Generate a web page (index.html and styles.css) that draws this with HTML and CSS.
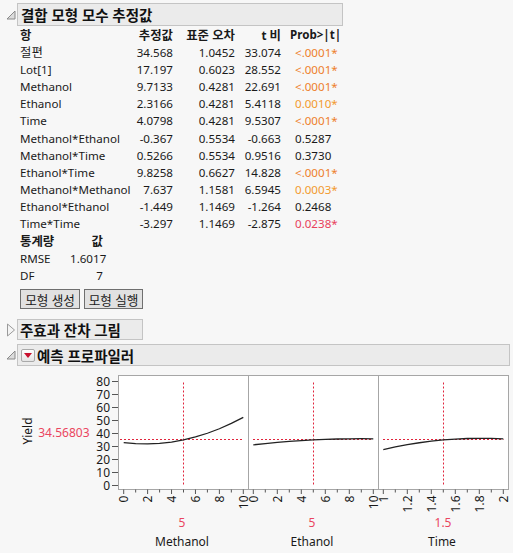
FILE: index.html
```html
<!DOCTYPE html>
<html lang="ko">
<head>
<meta charset="utf-8">
<title>결합 모형 모수 추정값</title>
<link rel="stylesheet" href="styles.css">
</head>
<body>
<section class="outline">
  <div class="head">
    <svg class="tri" width="10" height="10" viewBox="0 0 10 10"><polygon points="1,9 9,1 9,9" /></svg>
    <div class="title t1">결합 모형 모수 추정값</div>
  </div>
  <div class="body">
    <div class="est">
      <div class="h l ko">항</div><div class="h r ko">추정값</div><div class="h r ko">표준 오차</div><div class="h r">t <span class="ko">비</span></div><div class="h p">Prob&gt;|t|</div>
      <div class="ko">절편</div><div class="r">34.568</div><div class="r">1.0452</div><div class="r">33.074</div><div class="p o1">&lt;.0001*</div>
      <div>Lot[1]</div><div class="r">17.197</div><div class="r">0.6023</div><div class="r">28.552</div><div class="p o1">&lt;.0001*</div>
      <div>Methanol</div><div class="r">9.7133</div><div class="r">0.4281</div><div class="r">22.691</div><div class="p o1">&lt;.0001*</div>
      <div>Ethanol</div><div class="r">2.3166</div><div class="r">0.4281</div><div class="r">5.4118</div><div class="p o2">0.0010*</div>
      <div>Time</div><div class="r">4.0798</div><div class="r">0.4281</div><div class="r">9.5307</div><div class="p o1">&lt;.0001*</div>
      <div>Methanol*Ethanol</div><div class="r">-0.367</div><div class="r">0.5534</div><div class="r">-0.663</div><div class="p">0.5287</div>
      <div>Methanol*Time</div><div class="r">0.5266</div><div class="r">0.5534</div><div class="r">0.9516</div><div class="p">0.3730</div>
      <div>Ethanol*Time</div><div class="r">9.8258</div><div class="r">0.6627</div><div class="r">14.828</div><div class="p o1">&lt;.0001*</div>
      <div>Methanol*Methanol</div><div class="r">7.637</div><div class="r">1.1581</div><div class="r">6.5945</div><div class="p o2">0.0003*</div>
      <div>Ethanol*Ethanol</div><div class="r">-1.449</div><div class="r">1.1469</div><div class="r">-1.264</div><div class="p">0.2468</div>
      <div>Time*Time</div><div class="r">-3.297</div><div class="r">1.1469</div><div class="r">-2.875</div><div class="p o3">0.0238*</div>
    </div>
    <div class="stats">
      <div class="h ko">통계량</div><div class="h r ko">값</div>
      <div>RMSE</div><div class="r">1.6017</div>
      <div>DF</div><div class="r">7</div>
    </div>
    <div class="btns">
      <button class="btn b1">모형 생성</button><button class="btn b2">모형 실행</button>
    </div>
  </div>
</section>

<section class="outline s2">
  <div class="head">
    <svg class="tri closed" width="10" height="14" viewBox="0 0 10 14"><polygon points="1.5,1 8.5,7 1.5,13" /></svg>
    <div class="title t2">주효과 잔차 그림</div>
  </div>
</section>

<section class="outline s3">
  <div class="head">
    <svg class="tri" width="10" height="10" viewBox="0 0 10 10"><polygon points="1,9 9,1 9,9" /></svg>
    <div class="title t3"><span class="menu"><span class="arrow"></span></span>예측 프로파일러</div>
  </div>
  <svg class="prof" width="513" height="187" viewBox="0 366 513 187">
    <text class="lab" transform="translate(27,431) rotate(-90)" text-anchor="middle" dominant-baseline="central">Yield</text>
    <text class="red" x="89.5" y="432" text-anchor="end" dominant-baseline="central">34.56803</text>
    <g class="ticks">
      <line x1="112" y1="485.5" x2="118" y2="485.5"/>
      <line x1="112" y1="472.5" x2="118" y2="472.5"/>
      <line x1="112" y1="459.5" x2="118" y2="459.5"/>
      <line x1="112" y1="446.5" x2="118" y2="446.5"/>
      <line x1="112" y1="433.5" x2="118" y2="433.5"/>
      <line x1="112" y1="420.5" x2="118" y2="420.5"/>
      <line x1="112" y1="407.5" x2="118" y2="407.5"/>
      <line x1="112" y1="394.5" x2="118" y2="394.5"/>
      <line x1="112" y1="381.5" x2="118" y2="381.5"/>
    </g>
    <g class="num" text-anchor="end" dominant-baseline="central">
      <text x="110" y="485">0</text>
      <text x="110" y="472">10</text>
      <text x="110" y="459">20</text>
      <text x="110" y="446">30</text>
      <text x="110" y="433">40</text>
      <text x="110" y="420">50</text>
      <text x="110" y="407">60</text>
      <text x="110" y="394">70</text>
      <text x="110" y="381">80</text>
    </g>
    <rect class="frame" x="118.5" y="375.5" width="130" height="114"/>
    <rect class="frame" x="248.5" y="375.5" width="130" height="114"/>
    <rect class="frame" x="378.5" y="375.5" width="130" height="114"/>
    <g class="ref">
      <line x1="120" y1="439.5" x2="242" y2="439.5"/>
      <line x1="183.5" y1="382.5" x2="183.5" y2="486"/>
      <line x1="253" y1="439.5" x2="373" y2="439.5"/>
      <line x1="313.5" y1="382.5" x2="313.5" y2="486"/>
      <line x1="383" y1="439.5" x2="503.5" y2="439.5"/>
      <line x1="443.5" y1="382.5" x2="443.5" y2="486"/>
    </g>
    <g class="curve">
      <polyline points="123.7,442.63 135.66,443.68 147.62,443.94 159.58,443.40 171.54,442.06 183.5,439.92 195.46,436.99 207.42,433.26 219.38,428.74 231.34,423.42 243.3,417.30"/>
      <polyline points="253.3,444.83 265.3,443.55 277.3,442.42 289.3,441.43 301.3,440.60 313.3,439.92 325.3,439.40 337.3,439.02 349.3,438.79 361.3,438.72 373.3,438.79"/>
      <polyline points="383.3,449.54 395.3,446.93 407.3,444.66 419.3,442.74 431.3,441.16 443.3,439.92 455.3,439.03 467.3,438.48 479.3,438.28 491.3,438.42 503.3,438.90"/>
    </g>
    <g class="ticks">
      <line x1="123.7" y1="489.5" x2="123.7" y2="494"/><line x1="135.66" y1="489.5" x2="135.66" y2="492.5"/>
      <line x1="147.62" y1="489.5" x2="147.62" y2="494"/><line x1="159.58" y1="489.5" x2="159.58" y2="492.5"/>
      <line x1="171.54" y1="489.5" x2="171.54" y2="494"/><line x1="183.5" y1="489.5" x2="183.5" y2="492.5"/>
      <line x1="195.46" y1="489.5" x2="195.46" y2="494"/><line x1="207.42" y1="489.5" x2="207.42" y2="492.5"/>
      <line x1="219.38" y1="489.5" x2="219.38" y2="494"/><line x1="231.34" y1="489.5" x2="231.34" y2="492.5"/>
      <line x1="243.3" y1="489.5" x2="243.3" y2="494"/>
      <line x1="253.3" y1="489.5" x2="253.3" y2="494"/><line x1="265.3" y1="489.5" x2="265.3" y2="492.5"/>
      <line x1="277.3" y1="489.5" x2="277.3" y2="494"/><line x1="289.3" y1="489.5" x2="289.3" y2="492.5"/>
      <line x1="301.3" y1="489.5" x2="301.3" y2="494"/><line x1="313.3" y1="489.5" x2="313.3" y2="492.5"/>
      <line x1="325.3" y1="489.5" x2="325.3" y2="494"/><line x1="337.3" y1="489.5" x2="337.3" y2="492.5"/>
      <line x1="349.3" y1="489.5" x2="349.3" y2="494"/><line x1="361.3" y1="489.5" x2="361.3" y2="492.5"/>
      <line x1="373.3" y1="489.5" x2="373.3" y2="494"/>
      <line x1="383.3" y1="489.5" x2="383.3" y2="494"/><line x1="395.3" y1="489.5" x2="395.3" y2="492.5"/>
      <line x1="407.3" y1="489.5" x2="407.3" y2="494"/><line x1="419.3" y1="489.5" x2="419.3" y2="492.5"/>
      <line x1="431.3" y1="489.5" x2="431.3" y2="494"/><line x1="443.3" y1="489.5" x2="443.3" y2="492.5"/>
      <line x1="455.3" y1="489.5" x2="455.3" y2="494"/><line x1="467.3" y1="489.5" x2="467.3" y2="492.5"/>
      <line x1="479.3" y1="489.5" x2="479.3" y2="494"/><line x1="491.3" y1="489.5" x2="491.3" y2="492.5"/>
      <line x1="503.3" y1="489.5" x2="503.3" y2="494"/>
    </g>
    <g class="num" text-anchor="end" dominant-baseline="central">
      <text transform="translate(123.7,495.5) rotate(-90)">0</text>
      <text transform="translate(147.62,495.5) rotate(-90)">2</text>
      <text transform="translate(171.54,495.5) rotate(-90)">4</text>
      <text transform="translate(195.46,495.5) rotate(-90)">6</text>
      <text transform="translate(219.38,495.5) rotate(-90)">8</text>
      <text transform="translate(243.3,495.5) rotate(-90)">10</text>
      <text transform="translate(253.3,495.5) rotate(-90)">0</text>
      <text transform="translate(277.3,495.5) rotate(-90)">2</text>
      <text transform="translate(301.3,495.5) rotate(-90)">4</text>
      <text transform="translate(325.3,495.5) rotate(-90)">6</text>
      <text transform="translate(349.3,495.5) rotate(-90)">8</text>
      <text transform="translate(373.3,495.5) rotate(-90)">10</text>
      <text transform="translate(383.3,495.5) rotate(-90)">1</text>
      <text transform="translate(407.3,495.5) rotate(-90)">1.2</text>
      <text transform="translate(431.3,495.5) rotate(-90)">1.4</text>
      <text transform="translate(455.3,495.5) rotate(-90)">1.6</text>
      <text transform="translate(479.3,495.5) rotate(-90)">1.8</text>
      <text transform="translate(503.3,495.5) rotate(-90)">2</text>
    </g>
    <g text-anchor="middle" dominant-baseline="central">
      <text class="red" x="182" y="522">5</text>
      <text class="lab" x="182" y="541">Methanol</text>
      <text class="red" x="312" y="522">5</text>
      <text class="lab" x="312" y="541">Ethanol</text>
      <text class="red" x="443" y="522">1.5</text>
      <text class="lab" x="442" y="541">Time</text>
    </g>
  </svg>
</section>
</body>
</html>
```

FILE: styles.css
```css
html, body {
  margin: 0;
  padding: 0;
}
body {
  background: #f7f7f7;
  color: #1a1a1a;
  font-family: "Noto Sans", "Noto Sans CJK KR", sans-serif;
  font-size: 11.6px;
  width: 513px;
  height: 553px;
  overflow: hidden;
  padding-top: 3px;
  box-sizing: border-box;
}
.outline .head {
  display: flex;
  align-items: center;
  padding-left: 6px;
  gap: 1px;
}
.tri {
  display: block;
  flex: none;
}
.tri polygon {
  fill: #dcdcdc;
  stroke: #8a8a8a;
  stroke-width: 1;
}
.tri.closed polygon {
  fill: #f4f4f4;
  stroke: #9a9a9a;
}
.title {
  box-sizing: border-box;
  background: #ebebeb;
  border: 1px solid #c4c4c4;
  font-weight: bold;
  font-size: 14.5px;
  color: #111;
  display: flex;
  align-items: center;
  padding: 0 3px 0 3px;
  white-space: nowrap;
}
.t1 { width: 326px; height: 23px; }
.t2 { width: 126px; height: 21px; padding-left: 2px; }
.t3 { width: 493px; height: 22px; }
.menu {
  box-sizing: border-box;
  width: 14px;
  height: 13px;
  border: 1px solid #a9a9a9;
  border-radius: 2px;
  background: linear-gradient(#ffffff, #e4e4e4);
  display: flex;
  align-items: center;
  justify-content: center;
  margin-right: 2px;
}
.arrow {
  width: 0;
  height: 0;
  border-left: 4px solid transparent;
  border-right: 4px solid transparent;
  border-top: 5px solid #c8102e;
  margin-top: 1px;
}
.body {
  padding-left: 20px;
}
.ko {
  font-size: 12.4px;
}
.est {
  display: grid;
  grid-template-columns: 115px 38px 62px 46px 70px;
  grid-template-rows: 17.5px;
  grid-auto-rows: 17.2px;
  align-items: center;
  white-space: nowrap;
}
.h { font-weight: bold; }
.r { text-align: right; }
.p { padding-left: 14px; }
.h.p { padding-left: 9px; }
.o1 { color: #ee7f2b; }
.o2 { color: #f29a2e; }
.o3 { color: #e8425c; }
.stats {
  display: grid;
  grid-template-columns: 50px 33px;
  grid-auto-rows: 17.2px;
  align-items: center;
  white-space: nowrap;
}
.btns {
  display: flex;
  gap: 4px;
  margin-top: 5px;
}
.btn {
  box-sizing: border-box;
  height: 20px;
  padding: 0;
  border: 1px solid #6f6f6f;
  background: #e1e1e1;
  font-family: "Noto Sans", "Noto Sans CJK KR", sans-serif;
  font-size: 12.6px;
  color: #1a1a1a;
  border-radius: 0;
}
.b1 { width: 60px; }
.b2 { width: 59px; }
.s2 { margin-top: 10px; }
.s3 { margin-top: 4px; }
.prof {
  display: block;
}
.prof text {
  font-family: "Noto Sans", sans-serif;
  font-size: 12px;
  fill: #1a1a1a;
}
.prof .red { fill: #ea4560; }
.frame {
  fill: #ffffff;
  stroke: #a6a6a6;
  stroke-width: 1;
}
.ticks line {
  stroke: #555;
  stroke-width: 1;
}
.ref line {
  stroke: #e0243c;
  stroke-width: 1;
  stroke-dasharray: 2 2;
}
.curve polyline {
  fill: none;
  stroke: #222;
  stroke-width: 1.3;
}
```
